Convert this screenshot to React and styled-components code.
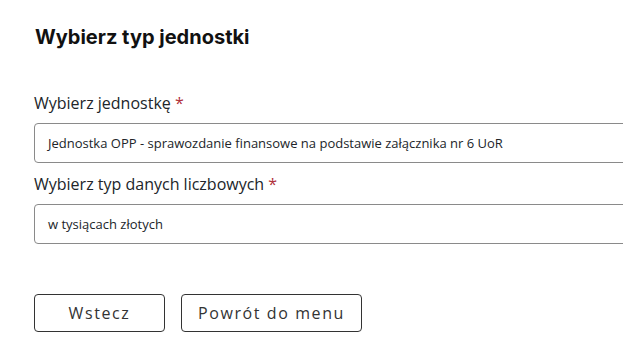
import React from "react";
import styled, { createGlobalStyle } from "styled-components";

const Global = createGlobalStyle`
  html, body { margin: 0; padding: 0; background: #fff; }
  body { font-family: "Open Sans", "Liberation Sans", sans-serif; color: #212529; overflow: hidden; }
  * { box-sizing: border-box; }
`;

const Page = styled.div`
  width: 623px;
  height: 357px;
  overflow: hidden;
  padding: 25px 0 0 34px;
`;

const Title = styled.h2`
  margin: 0 0 43px 1px;
  font-family: "Inter", "Noto Sans", sans-serif;
  font-weight: 700;
  font-size: 20px;
  line-height: 24px;
  color: #111;
`;

const Field = styled.div`
  display: flex;
  flex-direction: column;
  margin-bottom: ${(p) => p.$mb || 10}px;
`;

const Label = styled.label`
  font-size: 16px;
  line-height: 22px;
  color: #212529;
  margin-bottom: 9px;
`;

const Star = styled.span`
  color: #b0303a;
`;

const Select = styled.div`
  width: 640px;
  height: 40px;
  border: 1px solid #8a8a8a;
  border-radius: 4px;
  display: flex;
  align-items: center;
  padding-left: 13px;
  font-size: 13px;
  color: #212529;
`;

const Buttons = styled.div`
  display: flex;
  gap: 16px;
`;

const Button = styled.button`
  width: ${(p) => p.$w}px;
  height: 38px;
  background: #fff;
  border: 1px solid #333;
  border-radius: 4px;
  font-family: "Open Sans", "Liberation Sans", sans-serif;
  font-size: 16px;
  letter-spacing: 1.6px;
  color: #333;
  padding: 0;
`;

export default function App() {
  return (
    <>
      <Global />
      <Page>
        <Title>Wybierz typ jednostki</Title>
        <Field>
          <Label>
            Wybierz jednostkę <Star>*</Star>
          </Label>
          <Select>Jednostka OPP - sprawozdanie finansowe na podstawie załącznika nr 6 UoR</Select>
        </Field>
        <Field $mb={50}>
          <Label>
            Wybierz typ danych liczbowych <Star>*</Star>
          </Label>
          <Select>w tysiącach złotych</Select>
        </Field>
        <Buttons>
          <Button $w={131}>Wstecz</Button>
          <Button $w={181}>Powrót do menu</Button>
        </Buttons>
      </Page>
    </>
  );
}
